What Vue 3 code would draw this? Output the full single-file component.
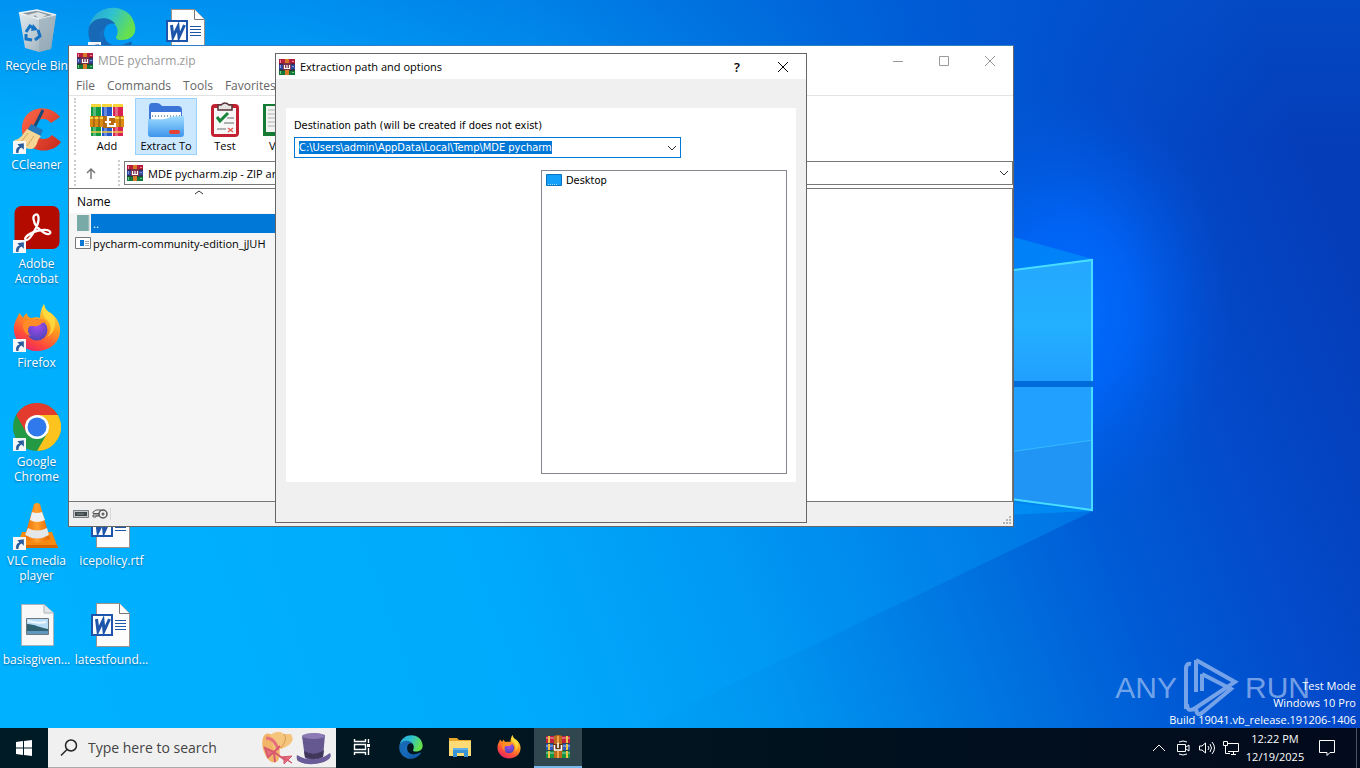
<script setup>
import { ref, onMounted } from 'vue'

const shortcuts = [
  { icon: 'bin', label: 'Recycle Bin', col: 1, row: 1 },
  { icon: 'ccleaner', label: 'CCleaner', col: 1, row: 2, link: true },
  { icon: 'acrobat', label: 'Adobe Acrobat', col: 1, row: 3, link: true },
  { icon: 'firefox', label: 'Firefox', col: 1, row: 4, link: true },
  { icon: 'chrome', label: 'Google Chrome', col: 1, row: 5, link: true },
  { icon: 'vlc', label: 'VLC media player', col: 1, row: 6, link: true },
  { icon: 'picture', label: 'basisgiven...', col: 1, row: 7 },
  { icon: 'edge', label: '', col: 2, row: 1, link: true },
  { icon: 'word', label: 'icepolicy.rtf', col: 2, row: 6 },
  { icon: 'word', label: 'latestfound...', col: 2, row: 7 },
  { icon: 'word', label: '', col: 3, row: 1 }
]

const menus = ['File', 'Commands', 'Tools', 'Favorites']
const tools = [
  { icon: 'add', label: 'Add' },
  { icon: 'extract', label: 'Extract To', active: true },
  { icon: 'test', label: 'Test' },
  { icon: 'view', label: 'View' }
]
const apps = ['taskview', 'edge', 'explorer', 'firefox', 'books']

const search = ref('')
const path = ref('C:\\Users\\admin\\AppData\\Local\\Temp\\MDE pycharm')
const pathInput = ref(null)

onMounted(() => {
  pathInput.value.focus()
  pathInput.value.select()
})
</script>

<template>
  <!-- shared icon shapes -->
  <svg class="defs" aria-hidden="true">
    <defs>
      <linearGradient id="edgeTop" x1="0" y1="0" x2="1" y2="0.4">
        <stop offset="0" stop-color="#259fdc" /><stop offset="0.5" stop-color="#2fc2cf" /><stop offset="1" stop-color="#66e04c" />
      </linearGradient>
      <linearGradient id="edgeLow" x1="0" y1="0" x2="1" y2="1">
        <stop offset="0" stop-color="#1b74c8" /><stop offset="1" stop-color="#0c4f9c" />
      </linearGradient>
      <linearGradient id="fox" x1="0.8" y1="0" x2="0.25" y2="1">
        <stop offset="0" stop-color="#fff04a" /><stop offset="0.4" stop-color="#ff9a1f" /><stop offset="0.75" stop-color="#ff4a3b" /><stop offset="1" stop-color="#e8206c" />
      </linearGradient>
      <radialGradient id="foxCore" cx="0.5" cy="0.3" r="0.7">
        <stop offset="0" stop-color="#a44cf0" /><stop offset="1" stop-color="#4f45b8" />
      </radialGradient>
      <linearGradient id="folder" x1="0" y1="0" x2="0" y2="1">
        <stop offset="0" stop-color="#9fdcff" /><stop offset="1" stop-color="#3d94ec" />
      </linearGradient>
      <linearGradient id="cone" x1="0" y1="0" x2="1" y2="0">
        <stop offset="0" stop-color="#e96800" /><stop offset="0.5" stop-color="#ffa02e" /><stop offset="1" stop-color="#e86400" />
      </linearGradient>
      <linearGradient id="glass" x1="0" y1="0" x2="1" y2="1">
        <stop offset="0" stop-color="#dfe9ee" /><stop offset="0.6" stop-color="#b4c3cc" /><stop offset="1" stop-color="#8fa5b2" />
      </linearGradient>
      <linearGradient id="cred" x1="0" y1="0" x2="1" y2="1">
        <stop offset="0" stop-color="#ff6a4c" /><stop offset="1" stop-color="#c8281a" />
      </linearGradient>
    </defs>
    <symbol id="i-bin" viewBox="0 0 48 48">
      <path d="M6 6 43 8 38 42 26 45 12 41Z" fill="url(#glass)" />
      <path d="M6 6 24 3 43 8 26 12Z" fill="#8b979e" stroke="#eef4f6" stroke-width="1.5" />
      <path d="M26 12 43 8 38 42 26 45Z" fill="#93a8b6" opacity=".6" />
      <path d="m11 9 8 3 3-4 4 4 8-4-9-3Z" fill="#dce2e4" />
      <g fill="none" stroke="#1673c4" stroke-width="3"><path d="m13 25 4-6 5 3" /><path d="m25 23 2 6-5 4" /><path d="m19 33-6-1 0-5" /></g>
      <path d="m20 17 5 6-7 1Z" fill="#1673c4" />
    </symbol>
    <symbol id="i-ccleaner" viewBox="0 0 48 48">
      <path d="M47 11C38-1 18-1 11 13c-6 13 1 28 14 31 9 2 18-1 23-8l-9-7c-5 6-15 5-18-2-3-8 3-15 10-14 3 0 5 2 7 4Z" fill="url(#cred)" />
      <path d="M30 4 21 22" stroke="#164b78" stroke-width="3" />
      <path d="m18 18 12 6-3 7-13-6Z" fill="#2479bb" />
      <path d="M14 23 28 30C23 35 25 41 19 43 10 43 4 39 1 34 7 34 10 28 14 23Z" fill="#f6d694" />
      <path d="m15 27-7 9m13-6-7 10" stroke="#cfa362" />
    </symbol>
    <symbol id="i-acrobat" viewBox="0 0 48 48">
      <rect x="1.500" y="1" width="45" height="43" rx="7" fill="#b30b00" />
      <path d="M22 10c4-3 5 5 1 13-4 8-8 13-10 12-4-3 9-10 17-10 7-1 9 3 6 4-4 1-14-7-15-13-1-3-1-5 1-6Z" fill="none" stroke="#fff" stroke-width="2.300" />
    </symbol>
    <symbol id="i-firefox" viewBox="0 0 48 48">
      <path d="M31 0c1 5 3 7 7 9 6 5 10 12 9 19-1 12-12 19-23 19S2 39 1 27C0 18 5 14 6 9c2 2 3 3 4 5 1-3 3-4 4-5 0 3 1 4 4 5 5-1 7-1 9 0 0-5 1-9 4-14Z" fill="url(#fox)" />
      <circle cx="24" cy="26" r="10.500" fill="url(#foxCore)" />
      <path d="M24 16c4-2 8-1 10 3-3-1-4 0-5 0-5 6-11 1-13 4-3 5 2 9 2 9-6-1-10-9-7-14 4-4 9-3 13-2Z" fill="#ff8c26" />
      <path d="M31 0c-3 6-1 13 4 17 4 5 3 12-1 16 9-4 11-18 4-23-4-2-6-4-7-10Z" fill="#ffe13f" opacity=".75" />
    </symbol>
    <symbol id="i-chrome" viewBox="0 0 48 48">
      <circle cx="24" cy="24" r="24" fill="#249a45" />
      <path d="M24 12H44.800A24 24 0 0 1 24 48L34.400 30Z" fill="#fcc31e" />
      <path d="M3.200 12 13.600 30 24 12H44.800A24 24 0 0 0 3.200 12Z" fill="#e33b2e" />
      <circle cx="24" cy="24" r="12" fill="#fff" /><circle cx="24" cy="24" r="9.500" fill="#2f79ec" />
    </symbol>
    <symbol id="i-vlc" viewBox="0 0 48 48">
      <path d="M9 30H39L45 46H3Z" fill="#f58a12" /><path d="M4 43H44L45 46H3Z" fill="#d86500" />
      <path d="M21 2Q24 0 27 2L37 37Q24 44 11 37Z" fill="url(#cone)" />
      <path d="M19 10Q24 12 29 10L32 18Q24 22 17 18Z" fill="#eef0f1" />
      <path d="M15 26Q24 31 34 26L36 33Q24 40 12 33Z" fill="#e4e7e9" />
    </symbol>
    <symbol id="i-picture" viewBox="0 0 48 48">
      <path d="M8.500 3.500H31L40.500 12V44.500H8.500Z" fill="#f8f8f8" stroke="#a9b4ba" /><path d="M31 3.500V12H40.500" fill="#e2e6e8" stroke="#a9b4ba" />
      <path d="M13.500 17.500H35.500V33.500H13.500Z" fill="#b8dcf6" stroke="#6c7880" /><path d="M14 23c7 0 14 4 21 5v5H14Z" fill="#2f6170" /><path d="M14 30h21v3H14Z" fill="#5f97bd" /><path d="M15 19q9 3 18 1v2q-8 2-18-1Z" fill="#fff" opacity=".8" />
    </symbol>
    <symbol id="i-word" viewBox="0 0 48 48">
      <path d="M8.500 2.500H31.500L41.500 12.500V45.500H8.500Z" fill="#fdfdfd" stroke="#9c9089" /><path d="M31.500 2.500V12.500H41.500" fill="#fff" stroke="#777" />
      <path d="M27 19.500H38M27 22.500H38M27 25.500H38M27 28.500H38" stroke="#1f57a8" />
      <path d="M4 14H24V34H4Z" fill="#fff" stroke="#1c55ab" stroke-width="2" /><path d="M8.500 18 10 30 15 19.500 16 30 21.500 18" fill="none" stroke="#1c55ab" stroke-width="3" />
    </symbol>
    <symbol id="i-edge" viewBox="0 0 48 48">
      <path d="M1 20C6-5 43-6 47 19c2 10-6 14-13 14-6 0-7-2-5-5 3-9-5-15-13-15C9 13 4 16 1 20Z" fill="url(#edgeTop)" />
      <path d="M1 20C6 9 22 9 27 17c-6-2-11 2-11 9 0 9 8 15 18 12 4-1 9-4 10-3C36 48 21 51 11 44 2 38-1 29 1 20Z" fill="#1769b5" />
      <path d="M17 21c-5 12 6 24 20 19 4-2 8-6 7-4C36 49 19 50 13 39 9 33 11 25 17 21Z" fill="url(#edgeLow)" />
    </symbol>
    <symbol id="i-winrar" viewBox="0 0 16 16">
      <path d="M0 0H16V5H0Z" fill="#b51d3d" /><path d="M0 5H16V11H0Z" fill="#324a9c" /><path d="M0 11H16V16H0Z" fill="#16753b" />
      <path d="M1 1H2V4H1ZM13 2H15V3H13Z" fill="#f28aa2" /><path d="M1 6H2V9H1ZM13 7H15V8H13Z" fill="#8e91dc" /><path d="M1 12H2V15H1ZM13 13H15V14H13Z" fill="#69d27c" />
      <path d="M0 5H16M0 11H16" stroke="#281d2c" /><path d="M6 0H10V16H6Z" fill="#d97b26" />
      <path d="M4 4H12V11H4Z" fill="#7a3048" /><path d="M5.500 6V9.500H10.500V6M8 6V9" fill="none" stroke="#fff" stroke-width="1.200" />
    </symbol>
    <symbol id="i-books" viewBox="0 0 24 24">
      <path d="M0 1H24V8H0Z" fill="#c3203f" /><path d="M0 9H24V15H0Z" fill="#2d5cc0" /><path d="M0 16H24V23H0Z" fill="#159443" />
      <path d="M0 2H24V4H0ZM0 10H24V12H0ZM0 17H24V19H0Z" fill="#fff" opacity=".3" />
      <path d="M3 1V8M3 9V15M3 16V23M21 1V8M21 9V15M21 16V23" stroke="#efc545" stroke-width="2" />
      <path d="M8 1Q12-1 16 1V23H8Z" fill="#bd6b1b" /><path d="M11 1H13V23H11Z" fill="#eda24a" />
      <path d="M7 9H17V16H7Z" fill="#653811" /><path d="M8.500 10V15H15.500V10M12 8V13" fill="none" stroke="#fff" stroke-width="1.600" />
    </symbol>
    <symbol id="i-add" viewBox="0 0 36 36">
      <path d="M2 2H12V34H2Z" fill="#129a42" /><path d="M13 2H23V34H13Z" fill="#2358cc" /><path d="M24 2H34V34H24Z" fill="#d92250" />
      <path d="M4 2H7V34H4ZM15 2H18V34H15ZM26 2H29V34H26Z" fill="#fff" opacity=".3" /><path d="M2 2H12V5H2ZM13 2H23V5H13ZM24 2H34V5H24Z" fill="#f6d53a" />
      <path d="M2 30H12M13 30H23M24 30H34" stroke="#edc844" stroke-width="1.500" />
      <path d="M1 14H35V25H1Z" fill="#dc8a14" /><path d="M1 16H35" stroke="#ffd34a" stroke-width="2" />
      <path d="M5 14V25M10 14V25M31 14V25" stroke="#7c4a08" /><path d="M14 14H26V26H14Z" fill="#b76a10" /><path d="M26 15H19V24H26V21M16 20H22" fill="none" stroke="#fff" stroke-width="2.200" />
    </symbol>
    <symbol id="i-extract" viewBox="0 0 36 36">
      <path d="M1 5Q1 1 4 1H9Q12 1 14 4H30Q34 4 34 8V26H1Z" fill="#3c75d8" />
      <path d="M3 10H33V24H3Z" fill="#fff" /><path d="M4 14H32" stroke="#8ca4b8" stroke-width="2" stroke-dasharray="1 2" />
      <path d="M0 17Q18 18 20 16Q22 14 36 14V32Q36 35 33 35H3Q0 35 0 32Z" fill="url(#folder)" />
      <rect x="21" y="28" width="11" height="4" rx="2" fill="#e64132" />
    </symbol>
    <symbol id="i-test" viewBox="0 0 36 36">
      <rect x="4" y="2" width="28" height="33" rx="4" fill="#c32031" /><path d="M7 6H29V32H7Z" fill="#f6f7f6" />
      <path d="M11 3H14Q18-1 22 3H25V8H11Z" fill="#e6e2e2" stroke="#583537" stroke-width="1.500" /><path d="m10 15 3 4 8-8" fill="none" stroke="#19843a" stroke-width="3" />
      <path d="M20 16H27M17 21H27M10 27H19" stroke="#989b9d" stroke-width="1.500" /><path d="m21 26 5 4m0-4-5 4" stroke="#e25d55" stroke-width="1.500" />
    </symbol>
    <symbol id="i-view" viewBox="0 0 36 36">
      <path d="M0 2H36V34H0Z" fill="#167b32" /><path d="M3 4H17V30H3ZM19 4H34V30H19Z" fill="#f3f3f1" />
      <path d="M5 8H15M5 12H15M5 16H15M5 20H15M5 24H15M21 8H31M21 12H31M21 16H31" stroke="#adb1ad" />
    </symbol>
    <symbol id="i-taskview" viewBox="0 0 24 24">
      <path d="M4.500 4V6.500H15.500V4M4.500 20V17.500H15.500V20M4.500 9.500H15.500V14.500H4.500ZM18.500 4V8M18.500 13V20" fill="none" stroke="#fff" stroke-width="1.400" /><path d="M17 9H20V12H17Z" fill="#fff" />
    </symbol>
    <symbol id="i-explorer" viewBox="0 0 24 24">
      <path d="M1 3H9L11 5H23V21H1Z" fill="#e7a72c" /><path d="M1 6H23V21H1Z" fill="#ffdb75" /><path d="M5 13H20V22H16V18H9V22H5Z" fill="#3a93d5" /><path d="M5 13H20V15H5Z" fill="#61b2e8" />
    </symbol>
  </svg>

  <div class="screen">
    <main class="desktop">
      <svg class="wallpaper" viewBox="0 0 1360 728" preserveAspectRatio="none" aria-hidden="true">
        <defs>
          <linearGradient id="sky" x1="0" y1="0.6" x2="1" y2="0.4">
            <stop offset="0" stop-color="#00b1ff" /><stop offset="0.32" stop-color="#00a9fb" /><stop offset="0.48" stop-color="#0095f0" />
            <stop offset="0.62" stop-color="#0078e2" /><stop offset="0.75" stop-color="#005cd6" /><stop offset="0.87" stop-color="#034aca" /><stop offset="1" stop-color="#053db8" />
          </linearGradient>
          <linearGradient id="shade" x1="0" y1="0" x2="0" y2="1"><stop offset="0" stop-color="#0060d8" stop-opacity=".35" /><stop offset="0.2" stop-color="#0060d8" stop-opacity="0" /></linearGradient>
          <radialGradient id="glow"><stop offset="0" stop-color="#006cff" /><stop offset="0.4" stop-color="#0068ff" stop-opacity=".75" /><stop offset="1" stop-color="#0058e0" stop-opacity="0" /></radialGradient>
          <linearGradient id="beam" x1="0" y1="0" x2="1" y2="0"><stop offset="0" stop-color="#00b4ff" stop-opacity="0" /><stop offset="1" stop-color="#00a0ff" stop-opacity=".7" /></linearGradient>
          <linearGradient id="pane" x1="0" y1="0" x2="0" y2="1"><stop offset="0" stop-color="#24a8ff" /><stop offset="0.55" stop-color="#22b0ff" /><stop offset="1" stop-color="#219fff" /></linearGradient>
        </defs>
        <path d="M0 0H1360V728H0Z" fill="url(#sky)" />
        <path d="M0 0H1360V728H0Z" fill="url(#shade)" />
        <ellipse cx="1070" cy="310" rx="160" ry="220" fill="url(#glow)" />
        <path d="M1093 259 900 206V520L1093 511Z" fill="#0094fa" opacity=".6" />
        <path d="M1093 511 640 728H0V400Z" fill="url(#beam)" opacity=".5" />
        <path d="M960 277 1093 259V381H960Z" fill="url(#pane)" />
        <path d="M960 387H1093V510L960 492Z" fill="#22a0ff" />
        <path d="M960 459 1093 440V510L960 492Z" fill="#2095f5" />
        <path d="M960 459 1093 440" stroke="#35b9ff" />
        <path d="M960 381H1093V387H960Z" fill="#006bda" />
        <path d="M960 277 1092 260V381M1092 387V510L960 492" fill="none" stroke="#48dcff" stroke-width="2" />
      </svg>

      <div class="shortcuts">
        <a
          v-for="(item, i) in shortcuts"
          :key="i"
          href="#"
          class="shortcut"
          :aria-label="item.label || item.icon"
          :style="{ gridColumn: item.col, gridRow: item.row }"
        >
          <span class="picture">
            <svg class="big"><use :href="'#i-' + item.icon" /></svg>
            <svg v-if="item.link" class="arrow" viewBox="0 0 12 12">
              <path d="M0 0H12V12H0Z" fill="#f4f6f8" />
              <path d="M3 11Q2 6 6 5L4 3 10 2 10 8 8 6Q5 7 5 11Z" fill="#285b9c" />
            </svg>
          </span>
          <span v-if="item.label">{{ item.label }}</span>
        </a>
      </div>

      <div class="brand">
        <span>ANY</span>
        <svg viewBox="0 0 56 64">
          <path d="M8 8Q3 7 3 13V53M13 4 52 26 14 51Q4 58 4 48M13 4V36M19 18 48 33 19 57Q13 61 13 51M19 18V35" fill="none" stroke="currentColor" stroke-width="4" />
        </svg>
        <span>RUN</span>
      </div>
      <div class="build">
        <div>Test Mode</div>
        <div>Windows 10 Pro</div>
        <div>Build 19041.vb_release.191206-1406</div>
      </div>

      <section class="window archive">
        <header class="titlebar">
          <svg class="small"><use href="#i-winrar" /></svg>
          <span class="caption">MDE pycharm.zip</span>
          <button aria-label="Minimize"><svg viewBox="0 0 12 12"><path d="M1 6.500H11" /></svg></button>
          <button aria-label="Maximize"><svg viewBox="0 0 12 12"><path d="M1.500 1.500H10.500V10.500H1.500Z" /></svg></button>
          <button aria-label="Close"><svg viewBox="0 0 12 12"><path d="M1 1 11 11M11 1 1 11" /></svg></button>
        </header>
        <nav class="menu">
          <button v-for="m in menus" :key="m">{{ m }}</button>
        </nav>
        <div class="toolbar">
          <button v-for="t in tools" :key="t.label" :class="{ active: t.active }">
            <svg><use :href="'#i-' + t.icon" /></svg>
            <span>{{ t.label }}</span>
          </button>
        </div>
        <div class="address">
          <button class="up" aria-label="Up">
            <svg viewBox="0 0 12 12"><path d="M6 12V2M2 6 6 2 10 6" fill="none" stroke="#777" stroke-width="1.500" /></svg>
          </button>
          <div class="location">
            <svg class="small"><use href="#i-winrar" /></svg>
            <select aria-label="Location">
              <option>MDE pycharm.zip - ZIP archive</option>
            </select>
            <svg class="chevron" viewBox="0 0 10 10"><path d="M1 3 5 7 9 3" /></svg>
          </div>
        </div>
        <div class="files">
          <table>
            <thead>
              <tr>
                <th>
                  <svg class="sort" viewBox="0 0 10 5"><path d="M1 4 5 1 9 4" /></svg>
                  Name
                </th>
              </tr>
            </thead>
            <tbody>
              <tr class="selected">
                <td>
                  <div class="file">
                    <svg viewBox="0 0 16 16"><path d="M2 0H14V16H2Z" fill="#78aaa7" /><path d="M14 0V16" stroke="#b8c8c4" /></svg>
                    <span>..</span>
                  </div>
                </td>
              </tr>
              <tr>
                <td>
                  <div class="file">
                    <svg viewBox="0 0 16 16"><path d="M.5 2.500H15.500V13.500H.5Z" fill="#fff" stroke="#777" /><path d="M5 5H9V11H5Z" fill="#0d77d5" /><path d="M10 6.500H14M10 8.500H14M10 10.500H14" stroke="#aaa" /></svg>
                    <span>pycharm-community-edition_jJUH</span>
                  </div>
                </td>
              </tr>
            </tbody>
          </table>
        </div>
        <footer class="status">
          <svg class="disk" viewBox="0 0 16 8"><path d="M.5 .5H15.500V7.500H.5Z" fill="#c4c8ca" stroke="#777d80" /><path d="M2 2H14V6H2Z" fill="#40484a" /><path d="M4 4H11" stroke="#7c8a8c" /></svg>
          <svg class="key" viewBox="0 0 16 12"><circle cx="11" cy="6" r="4" fill="#eee" stroke="#555" stroke-width="1.500" /><circle cx="11" cy="6" r="1.500" fill="#666" /><path d="M9 2H4L1 4V5.500H7M7 7H1V9H4V8H7" fill="none" stroke="#555" /></svg>
          <svg class="resize" viewBox="0 0 10 10"><path d="M6 0H8V2H6ZM3 3H5V5H3ZM6 3H8V5H6ZM0 6H2V8H0ZM3 6H5V8H3ZM6 6H8V8H6Z" fill="#b4b4b4" /></svg>
        </footer>
      </section>

      <section class="window dialog" role="dialog" aria-label="Extraction path and options">
        <header class="titlebar">
          <svg class="small"><use href="#i-winrar" /></svg>
          <span class="caption">Extraction path and options</span>
          <button class="help" aria-label="Help">?</button>
          <button aria-label="Close"><svg viewBox="0 0 12 12"><path d="M1 1 11 11M11 1 1 11" /></svg></button>
        </header>
        <div class="panel">
          <label for="path">Destination path (will be created if does not exist)</label>
          <div class="combo">
            <input id="path" ref="pathInput" v-model="path" spellcheck="false" autocomplete="off" />
            <svg class="chevron" viewBox="0 0 10 10"><path d="M1 3 5 7 9 3" /></svg>
          </div>
          <ul class="tree">
            <li>
              <svg viewBox="0 0 16 12"><path d="M.5.5H15.500V11.500H.5Z" fill="#12a0fb" stroke="#0b72bd" /><path d="M2 10.500H12" stroke="#a8dcff" stroke-dasharray="1 1" /></svg>
              Desktop
            </li>
          </ul>
        </div>
      </section>
    </main>

    <footer class="taskbar">
      <button class="start" aria-label="Start">
        <svg viewBox="0 0 16 16"><path d="M0 2 7 1V7.500H0ZM8 1 16 0V7.500H8ZM0 8.500H7V15L0 14ZM8 8.500H16V16L8 15Z" fill="#fff" /></svg>
      </button>
      <div class="search">
        <svg class="lens" viewBox="0 0 18 18"><circle cx="11" cy="6.500" r="5.500" /><path d="M7 10.500 1 16.500" /></svg>
        <input v-model="search" type="text" aria-label="Search" placeholder="Type here to search" />
        <svg class="hats" viewBox="0 0 72 36">
          <ellipse cx="11" cy="18" rx="8" ry="15" transform="rotate(-16 11 18)" fill="#f0b568" />
          <path d="M10 5Q18-1 24 4L31 4Q35 10 29 15Q22 20 14 20Z" fill="#f6c57d" /><path d="M24 4Q28 9 21 18" fill="none" stroke="#d99a4e" />
          <path d="M6 8Q15 8 18 20" fill="none" stroke="#e6717d" stroke-width="3" />
          <path d="M5 18 14 22 8 27ZM14 22 20 16M14 22 25 30M14 22 15 32" fill="#e5727e" stroke="#d9596e" stroke-width="2" /><path d="m21 27 11-1-8 8 0-7 8 6Z" fill="#e76c81" stroke="#d6586e" />
          <path d="M37 25Q54 35 70 23Q73 28 64 32Q48 37 38 31Q36 29 37 25Z" fill="#6a5c98" /><path d="M42 6Q54 1 65 5L63 27Q54 33 45 28Z" fill="#655790" /><ellipse cx="53.500" cy="6" rx="11.500" ry="3" fill="#8c7ab4" /><path d="M44 21Q54 27 64 20L63 27Q54 31 45 27Z" fill="#40375b" />
        </svg>
      </div>
      <div class="apps">
        <button v-for="a in apps" :key="a" :aria-label="a" :class="{ running: a === 'books' }">
          <svg><use :href="'#i-' + a" /></svg>
        </button>
      </div>
      <div class="tray">
        <button aria-label="Show hidden icons"><svg viewBox="0 0 16 16"><path d="M2 11 8 5 14 11" /></svg></button>
        <button aria-label="Meet Now"><svg viewBox="0 0 16 16"><path d="M2.500 4.500H10.500V11.500H2.500ZM11 7 14 5V11L11 9M4 2Q8 0 12 2M4 14Q8 16 12 14" /></svg></button>
        <button aria-label="Volume"><svg viewBox="0 0 16 16"><path d="M.5 6H3L6.500 3V13L3 10H.5ZM9 6Q11 8 9 10M11 4Q14 8 11 12M13 2Q18 8 13 14" /></svg></button>
        <button aria-label="Network"><svg viewBox="0 0 16 16"><path d="M5 3.500H15.500V11.500H5M8 14.500H13M10.500 12V14M.5 1.500H4.500V5.500H.5ZM2.500 6V13.500H7" /></svg></button>
      </div>
      <div class="clock"><span>12:22 PM</span><span>12/19/2025</span></div>
      <button class="notes" aria-label="Notifications"><svg viewBox="0 0 18 18"><path d="M1.500 1.500H16.500V13.500H12L9 16.500 9 13.500H1.500Z" /></svg></button>
      <button class="peek" aria-label="Show desktop"></button>
    </footer>
  </div>
</template>

<style>
body {
  margin: 0;
  overflow: hidden;
}
</style>

<style scoped>
.defs {
  position: absolute;
  width: 0;
  height: 0;
}

.screen {
  display: flex;
  flex-direction: column;
  height: 100vh;
  font-family: "Open Sans", sans-serif;
  font-size: 12px;
  color: #000;
}

button {
  border: none;
  padding: 0;
  background: none;
  font: inherit;
  color: inherit;
}

button svg,
.picture svg {
  display: block;
}

/* desktop */
.desktop {
  position: relative;
  flex: 1;
  min-height: 0;
  overflow: hidden;
  background: #00adff;
}

.wallpaper {
  position: absolute;
  inset: 0;
  width: 100%;
  height: 100%;
}

.shortcuts {
  position: relative;
  display: grid;
  width: max-content;
  grid-template-columns: repeat(3, 75px);
  grid-template-rows: repeat(7, 99px);
}

.shortcut {
  display: flex;
  flex-direction: column;
  align-items: center;
  gap: 3px;
  padding: 7px 2px 0 0;
  line-height: 15px;
  text-align: center;
  text-decoration: none;
  color: #fff;
  text-shadow: 0 1px 2px rgba(0, 50, 90, 0.6);
}

.picture {
  position: relative;
}

.big {
  width: 48px;
  height: 48px;
}

.arrow {
  position: absolute;
  left: 0;
  bottom: 0;
  width: 13px;
  height: 13px;
}

.brand {
  position: absolute;
  right: 50px;
  bottom: 8px;
  display: flex;
  align-items: center;
  gap: 6px;
  font-family: "Liberation Sans Narrow", "Liberation Sans", sans-serif;
  font-size: 30px;
  color: rgba(180, 205, 245, 0.65);
}

.brand svg {
  width: 56px;
  height: 64px;
}

.build {
  position: absolute;
  right: 4px;
  bottom: 0;
  text-align: right;
  font-size: 11px;
  line-height: 17px;
  color: #fff;
}

/* windows */
.window {
  position: absolute;
  display: flex;
  flex-direction: column;
  border: 1px solid #666;
}

.titlebar {
  display: flex;
  align-items: center;
  background: #fff;
}

.small {
  width: 16px;
  height: 16px;
  flex: none;
}

.caption {
  flex: 1;
  padding-left: 5px;
}

.titlebar button {
  display: flex;
  justify-content: center;
  width: 46px;
}

.titlebar button svg {
  width: 12px;
  height: 12px;
  stroke: currentColor;
  fill: none;
}

.archive {
  top: 45px;
  right: 346px;
  bottom: 201px;
  left: 68px;
  background: #fff;
  border-top-color: #2f7fc4;
}

.archive .titlebar {
  height: 29px;
  padding-left: 8px;
  color: #999;
}

.menu {
  display: flex;
  gap: 12px;
  height: 20px;
  padding-left: 7px;
  border-bottom: 1px solid #e3e3e3;
  color: #666;
}

.toolbar {
  display: flex;
  height: 57px;
  margin: 2px 0 5px 5px;
  padding-left: 3px;
  border-left: 2px dotted #ccc;
}

.toolbar button {
  display: flex;
  flex-direction: column;
  align-items: center;
  box-sizing: border-box;
  width: 56px;
  padding-top: 3px;
  font-size: 11px;
  line-height: 16px;
  border: 1px solid transparent;
}

.toolbar button.active {
  width: 62px;
  background: #cce8ff;
  border-color: #99d1ff;
}

.toolbar svg {
  width: 36px;
  height: 36px;
}

.address {
  display: flex;
  align-items: center;
  height: 26px;
  margin-left: 5px;
  border-left: 2px dotted #ccc;
}

.address .up {
  display: flex;
  align-items: center;
  justify-content: center;
  height: 26px;
  width: 44px;
  padding-right: 12px;
  border-right: 2px dotted #ccc;
  box-sizing: border-box;
}

.up svg {
  width: 12px;
  height: 12px;
}

.location {
  flex: 1;
  display: flex;
  align-items: center;
  height: 22px;
  margin-left: 4px;
  padding: 0 3px 0 2px;
  border: 1px solid #777;
}

.location select {
  flex: 1;
  padding: 0 0 0 5px;
  border: none;
  outline: none;
  appearance: none;
  background: none;
  font: inherit;
  font-size: 11px;
}

.chevron,
.sort {
  width: 10px;
  height: 10px;
  fill: none;
  stroke: #333;
}

.files {
  flex: 1;
  margin-top: 2px;
  border: 1px solid #777;
  border-left-width: 0;
  background: linear-gradient(to right, #f5f5f5 258px, #fff 258px);
}

table {
  width: 100%;
  border-collapse: collapse;
}

th {
  position: relative;
  height: 24px;
  padding: 0 8px;
  background: #fff;
  text-align: left;
  font-weight: normal;
}

.sort {
  position: absolute;
  top: 1px;
  left: 125px;
  height: 5px;
}

td {
  padding: 0;
}

.file {
  display: flex;
  align-items: center;
  width: 258px;
  height: 20px;
  padding-left: 6px;
}

.file svg {
  width: 16px;
  height: 16px;
  flex: none;
}

.file span {
  flex: 1;
  padding-left: 2px;
  font-size: 11px;
  line-height: 19px;
}

.selected span {
  background: #0078d7;
  color: #fff;
}

.status {
  display: flex;
  align-items: center;
  gap: 3px;
  height: 24px;
  padding-left: 4px;
  background: #f0f0f0;
}

.disk {
  width: 16px;
  height: 8px;
}

.key {
  width: 16px;
  height: 12px;
  padding-right: 2px;
  border-right: 1px solid #d8d8d8;
}

.resize {
  width: 10px;
  height: 10px;
  margin-left: auto;
  align-self: flex-end;
}

.dialog {
  top: 53px;
  left: 275px;
  width: 530px;
  background: #f0f0f0;
}

.dialog .titlebar {
  height: 25px;
  padding-left: 3px;
}

.dialog .caption {
  font-size: 11px;
}

.titlebar .help {
  font-size: 13px;
  font-weight: 600;
}

.panel {
  display: flex;
  flex-direction: column;
  align-items: flex-start;
  margin: 29px 10px 40px;
  padding: 10px 9px 8px 8px;
  background: #fff;
  font-family: "DejaVu Sans Condensed", "DejaVu Sans", sans-serif;
  font-size: 11px;
}

.panel label {
  line-height: 16px;
}

.combo {
  display: flex;
  align-items: center;
  box-sizing: border-box;
  width: 387px;
  height: 21px;
  margin-top: 3px;
  padding: 0 3px 0 4px;
  border: 1px solid #0078d7;
}

.combo input {
  flex: 1;
  padding: 0;
  border: none;
  outline: none;
  font: inherit;
}

.combo input::selection {
  background: #0078d7;
  color: #fff;
}

.tree {
  box-sizing: border-box;
  width: 246px;
  min-height: 304px;
  margin: 12px 0 0 auto;
  padding: 1px 4px;
  border: 1px solid #828790;
  list-style: none;
}

.tree li {
  display: flex;
  align-items: center;
  gap: 4px;
  height: 16px;
}

.tree svg {
  width: 16px;
  height: 12px;
}

/* taskbar */
.taskbar {
  display: flex;
  height: 40px;
  background: linear-gradient(to right, #001b26, #01141f 50%, #020a1c);
  color: #fff;
}

.taskbar button {
  display: flex;
  align-items: center;
  justify-content: center;
}

.start {
  width: 48px;
}

.start svg {
  width: 16px;
  height: 16px;
}

.search {
  display: flex;
  align-items: center;
  box-sizing: border-box;
  width: 288px;
  padding: 0 4px 0 12px;
  background: #f0f0f0;
  border-bottom: 1px solid #aaa;
}

.lens {
  width: 18px;
  height: 18px;
  fill: none;
  stroke: #222;
  stroke-width: 1.500;
}

.search input {
  flex: 1;
  min-width: 0;
  padding: 0 0 0 10px;
  border: none;
  outline: none;
  background: none;
  font: inherit;
  font-size: 14px;
}

.search input::placeholder {
  color: #444;
}

.hats {
  width: 72px;
  height: 36px;
}

.apps {
  display: flex;
  gap: 1px;
  padding-left: 2px;
}

.apps button {
  box-sizing: border-box;
  width: 48px;
  border-bottom: 2px solid transparent;
}

.apps svg {
  width: 24px;
  height: 24px;
}

.apps button.running {
  background: #31474f;
  border-color: #76b9ed;
}

.tray {
  display: flex;
  margin-left: auto;
}

.tray button {
  width: 24px;
}

.tray svg {
  width: 16px;
  height: 16px;
  fill: none;
  stroke: #fff;
}

.clock {
  display: flex;
  flex-direction: column;
  align-items: center;
  justify-content: center;
  width: 64px;
  font-size: 11px;
  line-height: 18px;
}

.notes {
  width: 40px;
}

.notes svg {
  width: 18px;
  height: 18px;
  fill: none;
  stroke: #fff;
}

.taskbar .peek {
  width: 4px;
  margin-left: 9px;
  border-left: 1px solid #4c5562;
}
</style>
